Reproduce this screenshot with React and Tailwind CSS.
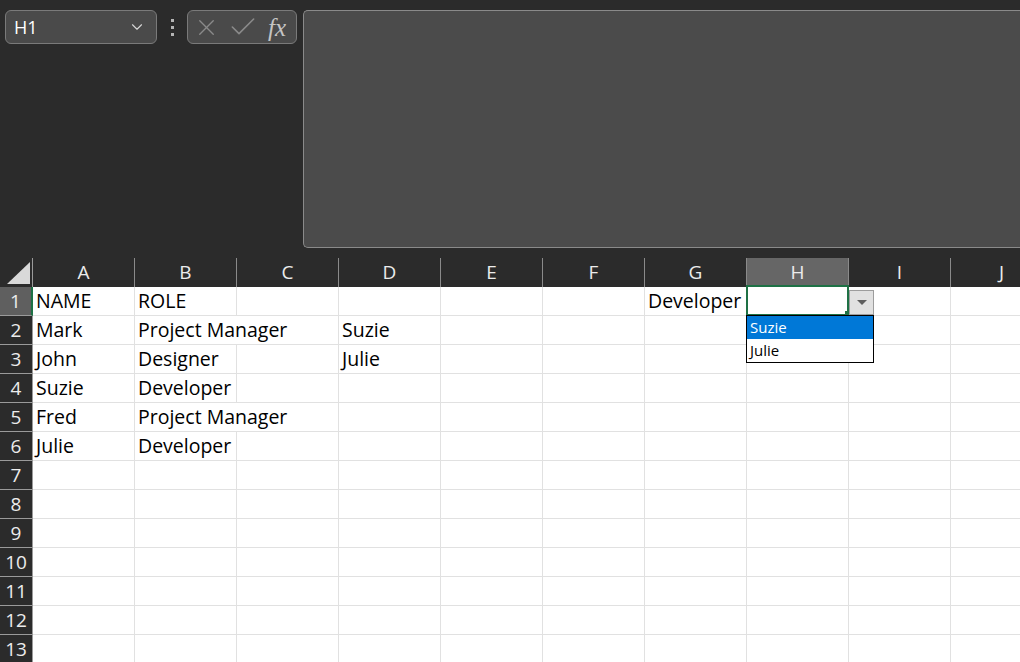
import { ChevronDown, X, Check } from 'lucide-react';

const COLS = ['A', 'B', 'C', 'D', 'E', 'F', 'G', 'H', 'I', 'J'];

// sheet contents keyed by row; span = how many columns the text runs across
const DATA = {
  1: { A: 'NAME', B: 'ROLE', G: 'Developer' },
  2: { A: 'Mark', B: 'Project Manager', D: 'Suzie' },
  3: { A: 'John', B: 'Designer', D: 'Julie' },
  4: { A: 'Suzie', B: 'Developer' },
  5: { A: 'Fred', B: 'Project Manager' },
  6: { A: 'Julie', B: 'Developer' },
};

const SPANS = { '2B': 2, '5B': 2 };

const ROWS = Array.from({ length: 13 }, (_, i) => i + 1);

function FormulaBar() {
  return (
    <div className="flex items-start h-[258px] pt-[10px] pl-[5px]">
      <div className="flex items-center justify-between w-[152px] h-[34px] rounded-[6px] border border-[#7a7a7a] bg-[#4a4a4a] pl-[8px] pr-[10px]">
        <span className="text-[18px] text-white">H1</span>
        <ChevronDown className="w-[18px] h-[18px] text-[#d6d6d6]" strokeWidth={1.5} />
      </div>
      <div className="flex flex-col items-center justify-center gap-[4px] w-[30px] h-[34px]">
        <span className="w-[3px] h-[3px] bg-[#b5b5b5]" />
        <span className="w-[3px] h-[3px] bg-[#b5b5b5]" />
        <span className="w-[3px] h-[3px] bg-[#b5b5b5]" />
      </div>
      <div className="flex items-center w-[110px] h-[34px] rounded-[6px] border border-[#7a7a7a] bg-[#4a4a4a] pl-[5px] gap-[7px]">
        <X className="w-[27px] h-[27px] text-[#8a8a8a]" strokeWidth={1.2} />
        <Check className="w-[32px] h-[32px] text-[#8a8a8a]" strokeWidth={1.2} />
        <span className="ml-[2px] text-[25px] italic text-[#c4c4c4] leading-none" style={{ fontFamily: '"Liberation Serif", serif' }}>
          fx
        </span>
      </div>
      <div className="flex-1 ml-[6px] h-[238px] rounded-l-[5px] border border-r-0 border-[#8a8a8a] bg-[#4b4b4b]" />
    </div>
  );
}

function DropdownList() {
  return (
    <>
      <div className="absolute z-20 left-[-1px] top-[-2px] w-[103px] h-[31px] border-2 border-[#1e7145] pointer-events-none" />
      <div className="absolute z-20 left-[98px] top-[24px] w-[5px] h-[5px] bg-[#1e7145]" />
      <div className="absolute z-20 left-[102px] top-[3px] w-[25px] h-[25px] flex items-center justify-center bg-[#e1e1e1] border border-[#9d9d9d]">
        <svg width="10" height="5" viewBox="0 0 10 5">
          <polygon points="0,0 10,0 5,5" fill="#5e5e5e" />
        </svg>
      </div>
      <div className="absolute z-30 left-[-1px] top-[28px] w-[128px] border border-black bg-white text-[15px] leading-[23px]">
        <div className="bg-[#0078d7] text-white pl-[3px]">Suzie</div>
        <div className="text-black pl-[3px]">Julie</div>
      </div>
    </>
  );
}

function Sheet() {
  return (
    <div className="grid grid-cols-[33px_repeat(10,102px)] auto-rows-[29px]">
      {/* corner + column letters */}
      <div className="relative border-r border-[#9a9a9a] bg-[#2b2b2b]">
        <svg className="absolute left-[7px] top-[4px]" width="23" height="22" viewBox="0 0 23 22">
          <polygon points="0,22 23,22 23,0" fill="#d9d9d9" />
        </svg>
      </div>
      {COLS.map((c) => (
        <div
          key={c}
          className={`flex items-center justify-center border-r border-[#8a8a8a] text-[19px] text-[#ececec] ${c === 'H' ? 'bg-[#666666]' : 'bg-[#2b2b2b]'}`}
        >
          {c}
        </div>
      ))}

      {ROWS.map((r) => {
        const cells = [];
        let skip = 0;
        COLS.forEach((c) => {
          if (skip > 0) {
            skip -= 1;
            return;
          }
          const span = SPANS[`${r}${c}`] || 1;
          skip = span - 1;
          const text = DATA[r] && DATA[r][c];
          cells.push(
            <div
              key={`${r}${c}`}
              className={`relative flex items-center pl-[3px] whitespace-nowrap bg-white border-r border-b border-[#e1e1e1] text-[19.5px] text-black ${span === 2 ? 'col-span-2' : ''}`}
            >
              {text}
              {r === 1 && c === 'H' && <DropdownList />}
            </div>
          );
        });
        return [
          <div
            key={`h${r}`}
            className={`flex items-center justify-center text-[19px] text-[#ececec] border-b border-[#9a9a9a] ${r === 1 ? 'bg-[#5f5f5f] border-r-2 border-r-[#1e7145]' : 'bg-[#2b2b2b] border-r border-r-[#9a9a9a]'}`}
          >
            {r}
          </div>,
          ...cells,
        ];
      })}
    </div>
  );
}

export default function App() {
  return (
    <div className="w-[1020px] h-[662px] overflow-hidden bg-[#2b2b2b]" style={{ fontFamily: '"Open Sans", "Noto Sans", sans-serif' }}>
      <FormulaBar />
      <Sheet />
    </div>
  );
}
